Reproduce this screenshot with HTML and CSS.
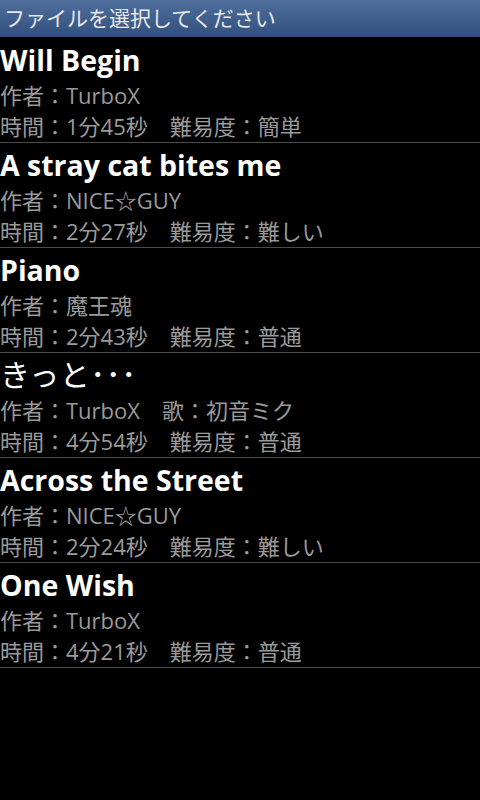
FILE: index.html
```html
<!DOCTYPE html>
<html lang="ja">
<head>
<meta charset="utf-8">
<link rel="stylesheet" href="styles.css">
</head>
<body>
<div class="titlebar">ファイルを選択してください</div>
<ul class="list">
  <li class="item">
    <div class="name">Will Begin</div>
    <div class="meta">作者：TurboX</div>
    <div class="meta">時間：1分45秒　難易度：簡単</div>
  </li>
  <li class="item">
    <div class="name">A stray cat bites me</div>
    <div class="meta">作者：NICE☆GUY</div>
    <div class="meta">時間：2分27秒　難易度：難しい</div>
  </li>
  <li class="item">
    <div class="name">Piano</div>
    <div class="meta">作者：魔王魂</div>
    <div class="meta">時間：2分43秒　難易度：普通</div>
  </li>
  <li class="item">
    <div class="name name-ja">きっと･･･</div>
    <div class="meta">作者：TurboX　歌：初音ミク</div>
    <div class="meta">時間：4分54秒　難易度：普通</div>
  </li>
  <li class="item">
    <div class="name">Across the Street</div>
    <div class="meta">作者：NICE☆GUY</div>
    <div class="meta">時間：2分24秒　難易度：難しい</div>
  </li>
  <li class="item">
    <div class="name">One Wish</div>
    <div class="meta">作者：TurboX</div>
    <div class="meta">時間：4分21秒　難易度：普通</div>
  </li>
</ul>
</body>
</html>
```
FILE: styles.css
```css
html, body {
  margin: 0;
  padding: 0;
  background: #000;
  width: 480px;
  height: 800px;
  overflow: hidden;
  font-family: "Open Sans", "Noto Sans CJK JP", sans-serif;
}
.titlebar {
  height: 37px;
  line-height: 37px;
  padding-left: 4px;
  color: #e8e8e8;
  font-size: 21px;
  background: linear-gradient(to bottom, #4e6e9b, #33507d);
  border-bottom: 1px solid #000;
  white-space: nowrap;
}
.list {
  list-style: none;
  margin: 0;
  padding: 0;
}
.item {
  display: flex;
  flex-direction: column;
  padding-top: 2px;
  box-sizing: border-box;
  height: 105px;
  border-bottom: 1px solid #4a4a4a;
}
.name {
  color: #fff;
  font-weight: bold;
  font-size: 28.5px;
  line-height: 40px;
  white-space: nowrap;
}
.name-ja {
  font-weight: normal;
  font-size: 30px;
  letter-spacing: 0.5px;
}
.meta {
  color: #9a9a9a;
  font-size: 22px;
  line-height: 31px;
  white-space: nowrap;
}
```
